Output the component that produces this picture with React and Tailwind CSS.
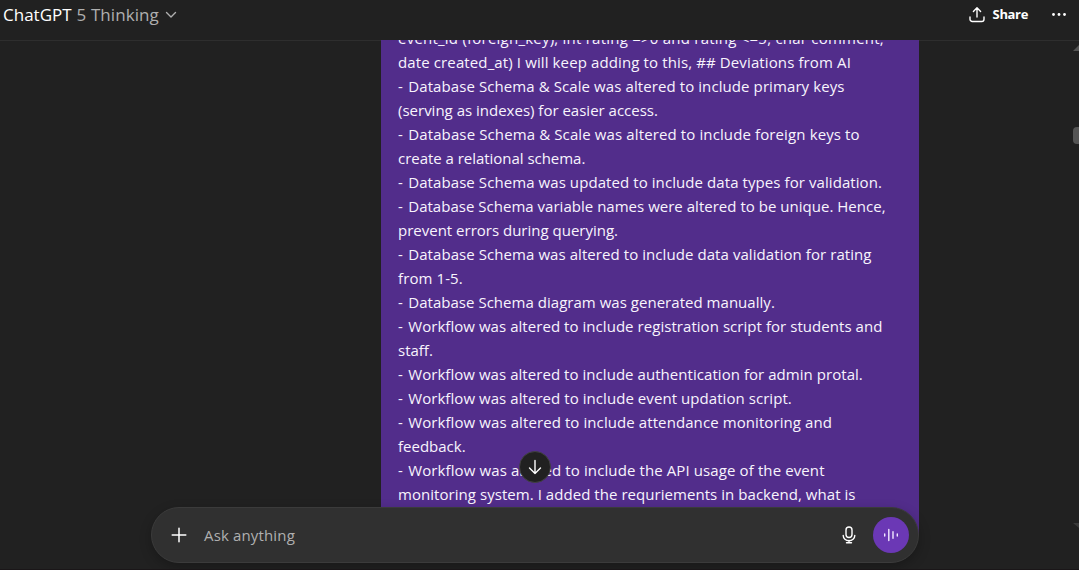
const LINES = [
  ['event_id (foreign_key), int rating =>0 and rating <=5, char comment,', 'tracking-[0.23px]'],
  ['date created_at) I will keep adding to this, ## Deviations from AI', 'tracking-[0.12px]'],
  ['- Database Schema & Scale was altered to include primary keys', 'tracking-[0.09px]'],
  ['(serving as indexes) for easier access.', 'tracking-[0px]'],
  ['- Database Schema & Scale was altered to include foreign keys to', 'tracking-[0.12px]'],
  ['create a relational schema.', 'tracking-[-0.03px]'],
  ['- Database Schema was updated to include data types for validation.', 'tracking-[0.08px]'],
  ['- Database Schema variable names were altered to be unique. Hence,', 'tracking-[0.02px]'],
  ['prevent errors during querying.', 'tracking-[0px]'],
  ['- Database Schema was altered to include data validation for rating', 'tracking-[0.07px]'],
  ['from 1-5.', 'tracking-[0.1px]'],
  ['- Database Schema diagram was generated manually.', 'tracking-[0.03px]'],
  ['- Workflow was altered to include registration script for students and', 'tracking-[0.05px]'],
  ['staff.', 'tracking-[0px]'],
  ['- Workflow was altered to include authentication for admin protal.', 'tracking-[0.05px]'],
  ['- Workflow was altered to include event updation script.', 'tracking-[0.06px]'],
  ['- Workflow was altered to include attendance monitoring and', 'tracking-[0.09px]'],
  ['feedback.', 'tracking-[0px]'],
  ['- Workflow was altered to include the API usage of the event', 'tracking-[0.11px]'],
  ['monitoring system. I added the requriements in backend, what is', 'tracking-[0.05px]'],
];

function Line({ text, tracking }) {
  const isItem = text.startsWith('- ');
  return (
    <p className="h-6 leading-6 whitespace-pre">
      {isItem && <span className="tracking-[0.75px]">{'- '}</span>}
      <span className={tracking}>{isItem ? text.slice(2) : text}</span>
    </p>
  );
}

function Header() {
  return (
    <header className="flex h-[41px] shrink-0 justify-between border-b border-[#2e2e2e] pt-px pl-[3px] text-white">
      <button className="flex h-7 items-center text-[17px] leading-7">
        <span>ChatGPT</span>
        <span className="ml-[5px] tracking-[0.08px] text-[#afafaf]">5 Thinking</span>
        <svg className="ml-[5px]" width="14" height="14" viewBox="0 0 14 14" fill="none" stroke="#afafaf" strokeWidth="1.4" strokeLinecap="round" strokeLinejoin="round">
          <path d="M2.5 4.5 7 9 11.5 4.5" />
        </svg>
      </button>
      <div className="flex h-7 items-center pr-3">
        <svg className="-mt-px" width="18" height="18" viewBox="0 0 18 18" fill="none" stroke="white" strokeWidth="1.4" strokeLinecap="round" strokeLinejoin="round">
          <path d="M9 11V2M5.4 5.4 9 1.8l3.6 3.6M2 11v2.2a2.3 2.3 0 0 0 2.3 2.3h9.4a2.3 2.3 0 0 0 2.3-2.3V11" />
        </svg>
        <span className="ml-[7px] text-[13px] font-bold tracking-[-0.35px]">Share</span>
        <svg className="ml-[23px]" width="16" height="16" viewBox="0 0 16 16" fill="white">
          <circle cx="2.5" cy="7.5" r="1.4" />
          <circle cx="8" cy="7.5" r="1.4" />
          <circle cx="13.5" cy="7.5" r="1.4" />
        </svg>
      </div>
    </header>
  );
}

function Composer() {
  return (
    <div className="absolute top-[507px] left-[151px] flex h-14 w-[768px] items-center rounded-full border border-[#3b3b3b] bg-[#303030] pr-[9px] pl-[19px] shadow-[0_4px_12px_rgba(0,0,0,0.25)]">
      <svg width="16" height="16" viewBox="0 0 16 16" fill="none" stroke="white" strokeWidth="1.5" strokeLinecap="round">
        <path d="M8 1.2v13.6M1.2 8h13.6" />
      </svg>
      <span className="ml-[17px] grow text-[15px] tracking-[0.15px] text-[#afafaf]">Ask anything</span>
      <svg width="18" height="18" viewBox="0 0 18 18" fill="none" stroke="white" strokeWidth="1.4" strokeLinecap="round">
        <rect x="6" y="1" width="6" height="10.5" rx="3" />
        <path d="M3.2 9.5a5.8 5.2 0 0 0 11.6 0M9 14.5v2M6.5 16.7h5" />
      </svg>
      <span className="ml-[15px] flex size-9 items-center justify-center rounded-full bg-[#6b38b5]">
        <svg width="16" height="16" viewBox="0 0 16 16" fill="none" stroke="#f2eaff" strokeWidth="1.4" strokeLinecap="round">
          <path d="M1.7 7v2M5.8 2.5v11M10 4.8v6.4M14.3 7v2" />
        </svg>
      </span>
    </div>
  );
}

export default function App() {
  return (
    <div className="relative flex h-[570px] w-[1079px] flex-col overflow-hidden border-b border-[#1a1618] bg-[#212121] font-['Open_Sans','Noto_Sans',sans-serif]">
      <Header />
      <main className="relative -mt-px h-[495px] shrink-0 overflow-hidden">
        <div className="ml-[381px] flow-root h-full w-[538px] bg-[#522d8b] pl-[17px] text-[15px] text-[#f8f4fd]">
          <div className="-mt-[14px]">
            {LINES.map(([text, tracking]) => (
              <Line key={text} text={text} tracking={tracking} />
            ))}
          </div>
        </div>
      </main>
      <svg className="absolute top-[40px] right-0" width="6" height="495" viewBox="0 0 6 495" fill="#555">
        <path d="M0 11 6 5V11Z" />
        <path d="M6 87H4a4 4 0 0 0-4 4v9a4 4 0 0 0 4 4h2Z" />
        <path d="M0 483H6V488Z" fill="#3a3a3a" />
      </svg>
      <button className="absolute top-[451px] left-[519px] flex size-8 items-center justify-center rounded-full border border-[#424242] bg-[#212121]">
        <svg width="16" height="16" viewBox="0 0 16 16" fill="none" stroke="white" strokeWidth="1.4" strokeLinecap="round" strokeLinejoin="round">
          <path d="M8 1.5v13M2.5 9 8 14.5 13.5 9" />
        </svg>
      </button>
      <Composer />
    </div>
  );
}
